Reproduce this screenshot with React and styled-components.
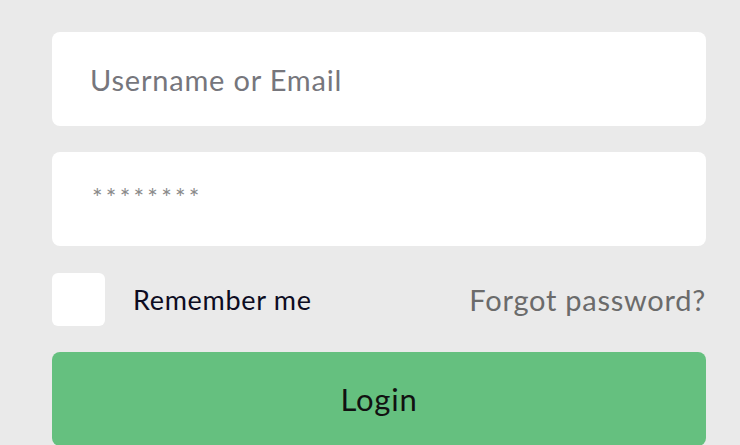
import React from "react"
import styled, { createGlobalStyle } from "styled-components"

const GlobalStyle = createGlobalStyle`
  body {
    margin: 0;
    background: #eaeaea;
    font-family: Lato, "Noto Sans", sans-serif;
  }
`

const Form = styled.form`
  display: flex;
  flex-direction: column;
  gap: 26px;
  padding: 32px 34px 0 52px;
`

const Field = styled.input`
  box-sizing: border-box;
  height: 94px;
  width: 100%;
  border: none;
  border-radius: 8px;
  background: #fff;
  padding: 0 38px;
  font-family: inherit;
  font-size: 29px;
  letter-spacing: 0.8px;
  color: #333;
  outline: none;
  &::placeholder {
    color: #76767c;
  }
`

const PasswordField = styled(Field)`
  font-size: 25px;
  padding-left: 40px;
  padding-bottom: 4px;
  letter-spacing: 3.2px;
  &::placeholder {
    color: #8a8a8a;
  }
`

const Row = styled.div`
  display: flex;
  align-items: center;
  justify-content: space-between;
  height: 54px;
`

const Remember = styled.label`
  display: flex;
  align-items: center;
  gap: 28px;
  font-size: 27px;
  letter-spacing: 0.7px;
  color: #0d0c22;
`

const Box = styled.input`
  appearance: none;
  margin: 0;
  width: 53px;
  height: 53px;
  border-radius: 6px;
  background: #fff;
`

const Forgot = styled.a`
  font-size: 29px;
  letter-spacing: 0.75px;
  color: #6b6b6b;
  text-decoration: none;
`

const Submit = styled.button`
  height: 94px;
  border: none;
  border-radius: 8px;
  background: #65c07f;
  color: #111;
  font-family: inherit;
  font-size: 31px;
  letter-spacing: 0.8px;
`

export default function App() {
  return (
    <>
      <GlobalStyle />
      <Form onSubmit={(e) => e.preventDefault()}>
        <Field placeholder="Username or Email" />
        <PasswordField type="password" placeholder="********" />
        <Row>
          <Remember>
            <Box type="checkbox" />
            Remember me
          </Remember>
          <Forgot href="#">Forgot password?</Forgot>
        </Row>
        <Submit>Login</Submit>
      </Form>
    </>
  )
}
